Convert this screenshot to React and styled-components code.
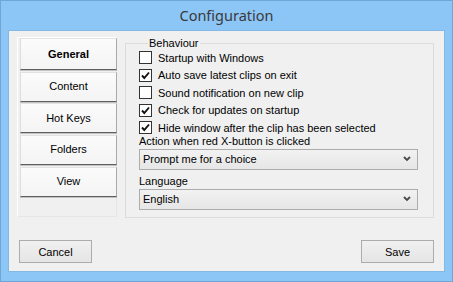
import React from "react";
import styled, { createGlobalStyle } from "styled-components";

const Global = createGlobalStyle`
  html, body { margin: 0; padding: 0; background: #8cc6f7; }
  body { font-family: "Liberation Sans", Arial, sans-serif; font-size: 11px; color: #000; }
  * { box-sizing: border-box; }
`;

const Window = styled.div`
  width: 453px;
  height: 282px;
  background: #8cc6f7;
  border: 1px solid #6fa6d6;
  display: flex;
  flex-direction: column;
  align-items: center;
`;

const TitleBar = styled.div`
  height: 29px;
  width: 100%;
  display: flex;
  align-items: center;
  justify-content: center;
  font-family: "Noto Sans", "Open Sans", sans-serif;
  font-size: 14.5px;
  color: #3a3a3a;
  padding-bottom: 2px;
`;

const Client = styled.div`
  width: 437px;
  height: 242px;
  background: #f0f0f0;
  border: 1px solid #84b9e6;
  display: flex;
  flex-direction: column;
  justify-content: space-between;
  padding: 6px 10px 8px 8px;
`;

const TopRow = styled.div`
  display: flex;
  align-items: flex-start;
  gap: 8px;
`;

const SidePanel = styled.div`
  width: 100px;
  height: 180px;
  border-top: 1px solid #ffffff;
  border-left: 1px solid #ffffff;
  border-right: 1px solid #e6e6e6;
  border-bottom: 1px solid #e6e6e6;
  padding: 0 0 0 2px;
  display: flex;
  flex-direction: column;
  gap: 1.67px;
`;

const Tab = styled.div`
  width: 97px;
  height: ${(p) => (p.$active ? 32 : 30)}px;
  display: flex;
  align-items: center;
  justify-content: center;
  background: linear-gradient(#fbfbfb, #f4f4f4);
  border-top: 1px solid #e2e2e2;
  border-left: 1px solid #dedede;
  border-right: 1px solid #a9a9a9;
  border-bottom: 1px solid #5f5f5f;
  box-shadow: 0 1px 0 #c2c2c2;
  font-size: 11px;
  font-weight: ${(p) => (p.$active ? 700 : 400)};
  color: #000;
  padding-bottom: 1px;
`;

const Group = styled.fieldset`
  margin: 0;
  width: 309px;
  border: 1px solid #dcdcdc;
  padding: 0 15px 7px 13px;
  min-inline-size: 0;
`;

const Legend = styled.legend`
  padding: 0 1px;
  margin-left: 9px;
  font-size: 11px;
  line-height: 12px;
`;

const Row = styled.label`
  display: flex;
  align-items: center;
  height: 17.5px;
  gap: 6px;
  white-space: nowrap;
`;

const Box = styled.span`
  width: 13px;
  height: 13px;
  border: 1px solid #333333;
  background: #ffffff;
  display: flex;
  align-items: center;
  justify-content: center;
  flex: none;
`;

const FieldLabel = styled.div`
  line-height: 13px;
  margin-top: ${(p) => p.$mt}px;
`;

const Combo = styled.div`
  width: 279px;
  height: 21px;
  margin-top: 1px;
  border: 1px solid #acacac;
  background: linear-gradient(#f2f2f2, #e6e6e6);
  display: flex;
  align-items: center;
  justify-content: space-between;
  padding: 0 6px 0 3px;
`;

const ButtonRow = styled.div`
  display: flex;
  justify-content: space-between;
  padding: 0 0 0 2px;
`;

const Button = styled.button`
  width: 73px;
  height: 23px;
  border: 1px solid #acacac;
  background: linear-gradient(#f0f0f0, #e5e5e5);
  font-family: "Liberation Sans", Arial, sans-serif;
  font-size: 11px;
  color: #000;
  padding: 0;
`;

const Check = () => (
  <svg width="9" height="9" viewBox="0 0 9 9">
    <path d="M1 4.5 L3.3 7 L8 1.5" fill="none" stroke="#111" strokeWidth="1.9" />
  </svg>
);

const Chevron = () => (
  <svg width="8" height="6" viewBox="0 0 8 6">
    <path d="M1 1 L4 4 L7 1" fill="none" stroke="#4a4a4a" strokeWidth="1.8" />
  </svg>
);

const options = [
  ["Startup with Windows", false],
  ["Auto save latest clips on exit", true],
  ["Sound notification on new clip", false],
  ["Check for updates on startup", true],
  ["Hide window after the clip has been selected", true],
];

export default function App() {
  return (
    <>
      <Global />
      <Window>
        <TitleBar>Configuration</TitleBar>
        <Client>
          <TopRow>
            <SidePanel>
              <Tab $active>General</Tab>
              <Tab>Content</Tab>
              <Tab>Hot Keys</Tab>
              <Tab>Folders</Tab>
              <Tab>View</Tab>
            </SidePanel>
            <Group>
              <Legend>Behaviour</Legend>
              {options.map(([t, c]) => (
                <Row key={t}>
                  <Box>{c && <Check />}</Box>
                  {t}
                </Row>
              ))}
              <FieldLabel $mt={-2}>Action when red X-button is clicked</FieldLabel>
              <Combo>
                <span>Prompt me for a choice</span>
                <Chevron />
              </Combo>
              <FieldLabel $mt={5}>Language</FieldLabel>
              <Combo>
                <span>English</span>
                <Chevron />
              </Combo>
            </Group>
          </TopRow>
          <ButtonRow>
            <Button>Cancel</Button>
            <Button>Save</Button>
          </ButtonRow>
        </Client>
      </Window>
    </>
  );
}
